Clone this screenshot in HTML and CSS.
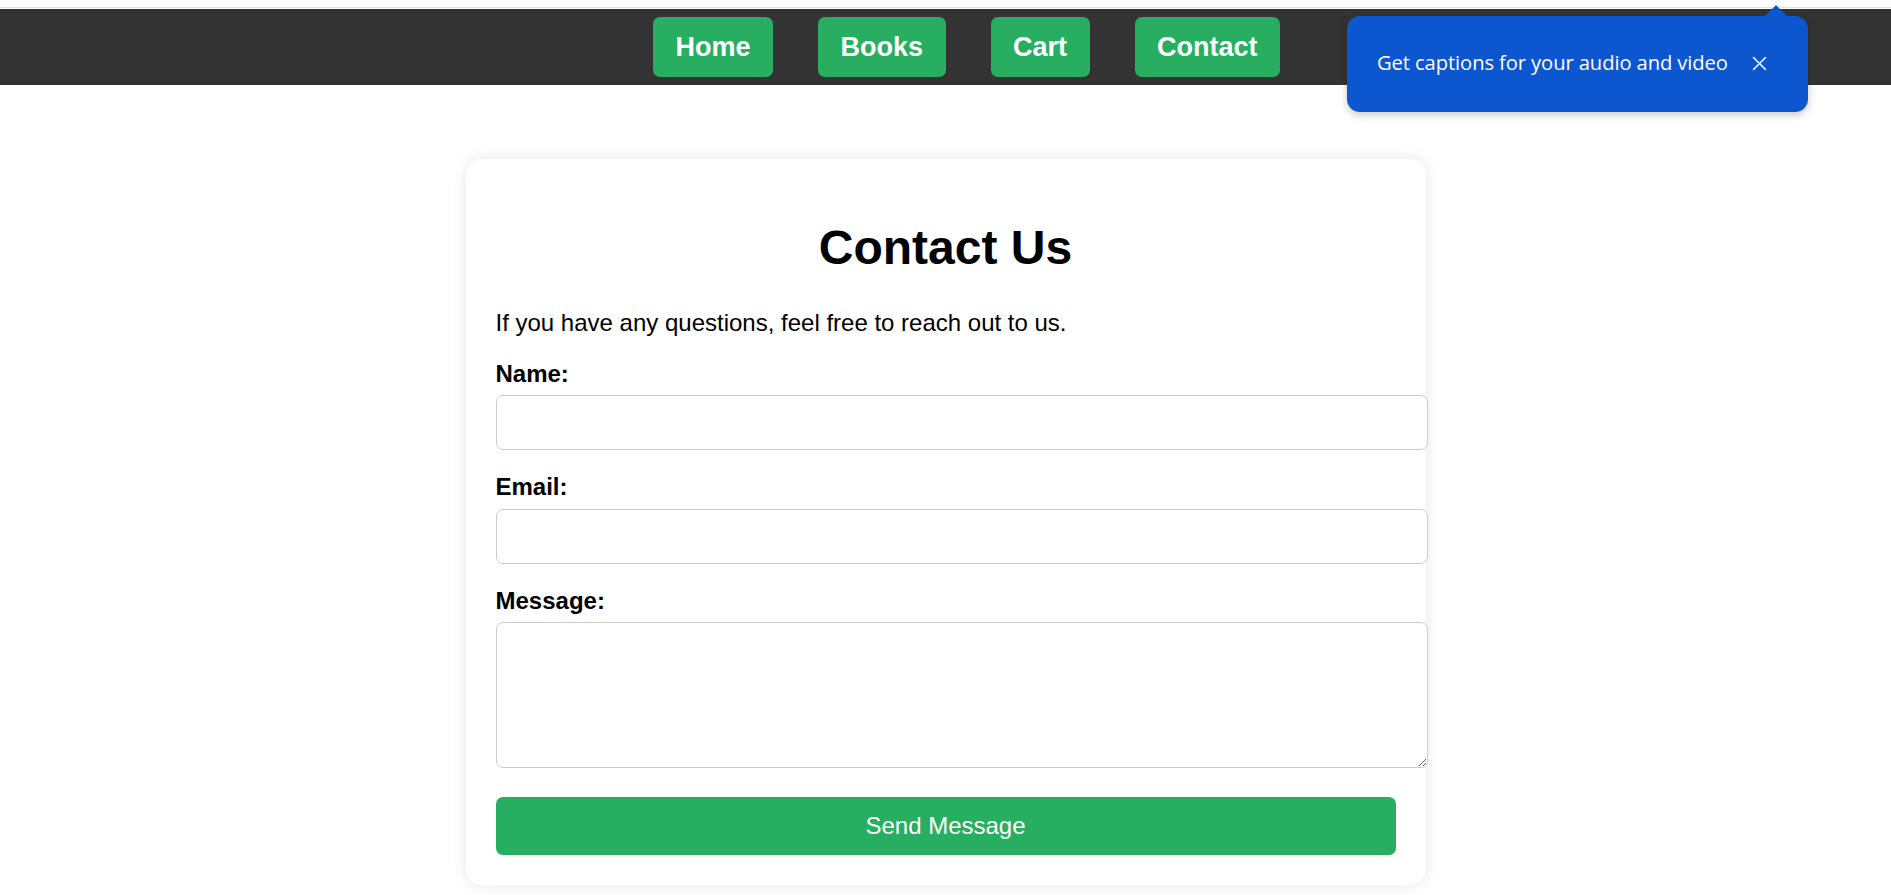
FILE: index.html
```html
<!DOCTYPE html>
<html lang="en">
<head>
<meta charset="utf-8">
<title>Contact Us</title>
<link rel="stylesheet" href="styles.css">
</head>
<body>
<div class="topline"></div>
<nav class="nav">
  <a class="nav-btn" href="#">Home</a>
  <a class="nav-btn" href="#">Books</a>
  <a class="nav-btn" href="#">Cart</a>
  <a class="nav-btn" href="#">Contact</a>
</nav>

<div class="popup">
  <span class="popup-arrow"></span>
  <span class="popup-text">Get captions for your audio and video</span>
  <svg class="popup-close" width="15" height="15" viewBox="0 0 15 15" aria-hidden="true">
    <path d="M1.5 1.5 L13.5 13.5 M13.5 1.5 L1.5 13.5" stroke="#fff" stroke-width="1.5" stroke-linecap="round" fill="none"/>
  </svg>
</div>

<main class="card">
  <h1 class="title">Contact Us</h1>
  <p class="intro">If you have any questions, feel free to reach out to us.</p>
  <form class="form">
    <label class="label" for="name">Name:</label>
    <input class="field" id="name" type="text">
    <label class="label" for="email">Email:</label>
    <input class="field" id="email" type="email">
    <label class="label" for="msg">Message:</label>
    <textarea class="area" id="msg"></textarea>
    <button class="send" type="button">Send Message</button>
  </form>
</main>
</body>
</html>
```

FILE: styles.css
```css
* { box-sizing: border-box; }
html, body { margin: 0; padding: 0; background: #fff; }
body {
  font-family: "Liberation Sans", Arial, sans-serif;
  color: #000;
  position: relative;
  min-height: 895px;
}
.topline {
  height: 8px;
  border-bottom: 1px solid #e2e2e2;
  margin-bottom: 1px;
  background: #fff;
}
.nav {
  background: #333;
  height: 76px;
  display: flex;
  align-items: center;
  justify-content: center;
  gap: 45px;
  padding-left: 42px;
}
.nav-btn {
  display: block;
  background: #27ae60;
  color: #fff;
  text-decoration: none;
  font-weight: bold;
  font-size: 27px;
  line-height: 30px;
  padding: 15px 22.5px;
  border-radius: 7px;
}

.popup {
  position: absolute;
  left: 1347px;
  top: 16px;
  width: 461px;
  height: 96px;
  background: #0c56d0;
  border-radius: 13px;
  box-shadow: 0 3px 8px rgba(0,0,0,0.22);
  display: flex;
  align-items: center;
  padding-left: 30px;
  color: #fff;
  z-index: 5;
}
.popup-arrow {
  position: absolute;
  left: 417px;
  top: -11px;
  width: 0;
  height: 0;
  border-left: 12px solid transparent;
  border-right: 12px solid transparent;
  border-bottom: 12px solid #0c56d0;
}
.popup-text {
  font-family: "Open Sans", "Noto Sans", sans-serif;
  font-size: 20.2px;
  letter-spacing: -0.1px;
  margin-top: -4px;
}
.popup-close {
  margin-left: 24px;
  margin-top: -2px;
  width: 15px;
  height: 15px;
}

.card {
  width: 960px;
  margin: 74px auto 0;
  background: #fff;
  border-radius: 15px;
  box-shadow: 0 0 15px rgba(0,0,0,0.1);
  padding: 30px;
}
.title {
  font-size: 48px;
  line-height: 55px;
  font-weight: bold;
  text-align: center;
  margin: 31px 0 34px;
}
.intro {
  font-size: 24px;
  line-height: 27.6px;
  margin: 0 0 23px;
}
.form { display: flex; flex-direction: column; align-items: flex-start; }
.label {
  display: block;
  font-size: 24px;
  line-height: 27.6px;
  font-weight: bold;
  margin-bottom: 8px;
}
.field {
  display: block;
  width: 932px;
  height: 55px;
  border: 1px solid #ccc;
  border-radius: 7px;
  margin: 0 0 23px;
  padding: 0 15px;
  font-size: 20px;
  background: #fff;
}
.area {
  display: block;
  width: 932px;
  height: 146px;
  border: 1px solid #ccc;
  border-radius: 7px;
  margin: 0 0 29px;
  padding: 15px;
  font-size: 20px;
  background: #fff;
  resize: both;
}
.send {
  display: block;
  width: 900px;
  height: 58px;
  background: #27ae60;
  color: #fff;
  border: none;
  border-radius: 7px;
  font-family: "Liberation Sans", Arial, sans-serif;
  font-size: 24px;
  cursor: pointer;
}
```
